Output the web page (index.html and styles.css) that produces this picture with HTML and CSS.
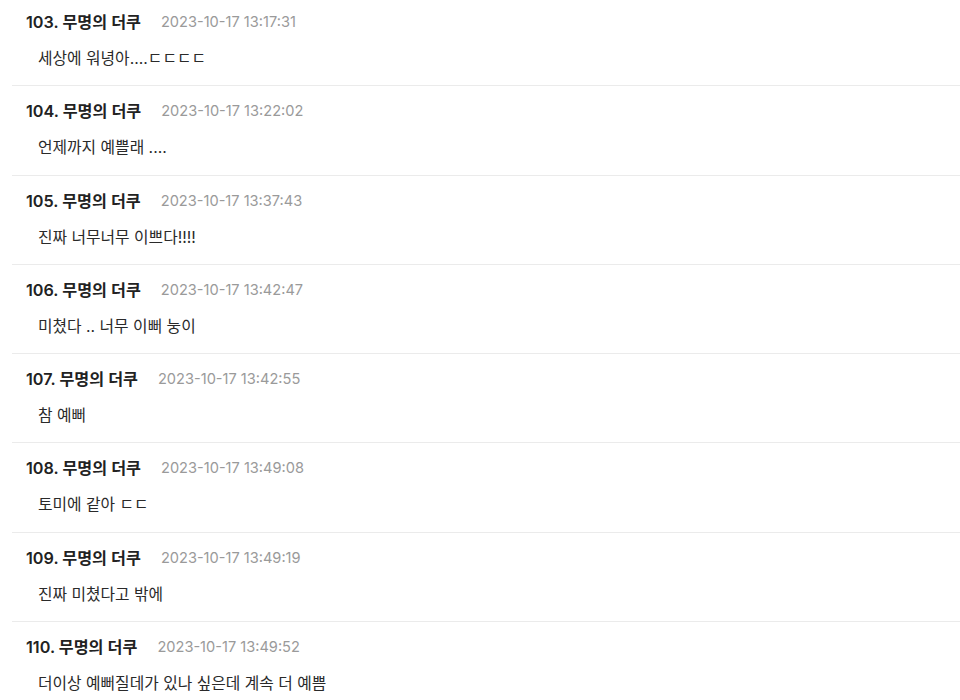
FILE: index.html
```html
<!DOCTYPE html>
<html lang="ko">
<head>
<meta charset="utf-8">
<link rel="stylesheet" href="styles.css">
</head>
<body>
<ul class="comments">
  <li class="comment">
    <div class="meta"><span class="name">103. 무명의 더쿠</span><span class="date">2023-10-17 13:17:31</span></div>
    <p class="text">세상에 워녕아....ㄷㄷㄷㄷ</p>
  </li>
  <li class="comment">
    <div class="meta"><span class="name">104. 무명의 더쿠</span><span class="date">2023-10-17 13:22:02</span></div>
    <p class="text">언제까지 예쁠래 ....</p>
  </li>
  <li class="comment">
    <div class="meta"><span class="name">105. 무명의 더쿠</span><span class="date">2023-10-17 13:37:43</span></div>
    <p class="text">진짜 너무너무 이쁘다!!!!</p>
  </li>
  <li class="comment">
    <div class="meta"><span class="name">106. 무명의 더쿠</span><span class="date">2023-10-17 13:42:47</span></div>
    <p class="text">미쳤다 .. 너무 이뻐 눙이</p>
  </li>
  <li class="comment">
    <div class="meta"><span class="name">107. 무명의 더쿠</span><span class="date">2023-10-17 13:42:55</span></div>
    <p class="text">참 예뻐</p>
  </li>
  <li class="comment">
    <div class="meta"><span class="name">108. 무명의 더쿠</span><span class="date">2023-10-17 13:49:08</span></div>
    <p class="text">토미에 같아 ㄷㄷ</p>
  </li>
  <li class="comment">
    <div class="meta"><span class="name">109. 무명의 더쿠</span><span class="date">2023-10-17 13:49:19</span></div>
    <p class="text">진짜 미쳤다고 밖에</p>
  </li>
  <li class="comment">
    <div class="meta"><span class="name">110. 무명의 더쿠</span><span class="date">2023-10-17 13:49:52</span></div>
    <p class="text">더이상 예뻐질데가 있나 싶은데 계속 더 예쁨</p>
  </li>
</ul>
</body>
</html>
```

FILE: styles.css
```css
html, body {
  margin: 0;
  padding: 0;
  background: #fff;
}
body {
  font-family: Inter, "Noto Sans CJK KR", sans-serif;
  color: #222;
}
.comments {
  list-style: none;
  margin: -3px 0 0 12px;
  padding: 0;
}
.comment {
  padding: 14px 0 15.3px 14px;
  border-bottom: 1px solid #ebebeb;
}
.meta {
  display: flex;
  align-items: center;
  gap: 20px;
  line-height: 22px;
}
.name {
  font-size: 16.2px;
  font-weight: 600;
  color: #222;
}
.date {
  font-size: 14.6px;
  color: #9a9a9a;
}
.text {
  margin: 15px 0 0 12px;
  font-size: 15.8px;
  line-height: 22px;
  color: #2a2a2a;
}
```
